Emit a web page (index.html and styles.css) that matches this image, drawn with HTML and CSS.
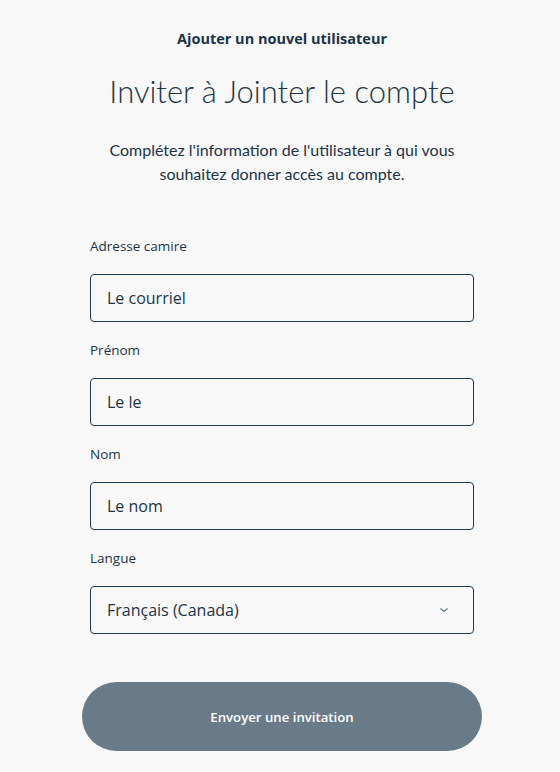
FILE: index.html
```html
<!DOCTYPE html>
<html lang="fr">
<head>
<meta charset="utf-8">
<title>Inviter à Jointer le compte</title>
<link rel="stylesheet" href="styles.css">
</head>
<body>
<main class="page">
  <p class="eyebrow">Ajouter un nouvel utilisateur</p>
  <h1 class="title">Inviter à Jointer le compte</h1>
  <p class="intro">Complétez l'information de l'utilisateur à qui vous<br>souhaitez donner accès au compte.</p>
  <form class="form">
    <div class="field">
      <label class="label">Adresse camire</label>
      <div class="input">Le courriel</div>
    </div>
    <div class="field">
      <label class="label">Prénom</label>
      <div class="input">Le le</div>
    </div>
    <div class="field">
      <label class="label">Nom</label>
      <div class="input">Le nom</div>
    </div>
    <div class="field">
      <label class="label">Langue</label>
      <div class="input select">
        <span>Français (Canada)</span>
        <svg class="chev" width="10" height="6" viewBox="0 0 10 6"><path d="M1.5 1.5 L5 4.5 L8.5 1.5" fill="none" stroke="#5a6e7e" stroke-width="1.1"/></svg>
      </div>
    </div>
    <button type="button" class="submit">Envoyer une invitation</button>
  </form>
</main>
</body>
</html>
```

FILE: styles.css
```css
html, body {
  margin: 0;
  padding: 0;
  background: #f8f8f8;
}
body {
  font-family: "Open Sans", "Noto Sans", sans-serif;
  color: #1c3447;
}
.page {
  width: 400px;
  margin-left: 82px;
  padding-top: 29px;
  display: flex;
  flex-direction: column;
  align-items: center;
}
.eyebrow {
  margin: 0;
  font-family: "Open Sans", sans-serif;
  font-weight: 700;
  font-size: 14.5px;
  line-height: 20px;
  color: #1c3447;
}
.title {
  margin: 22px 0 0;
  font-family: "Lato", sans-serif;
  font-weight: 300;
  font-size: 31px;
  line-height: 40px;
  color: #1c3447;
}
.intro {
  margin: 27px 0 0;
  font-family: "Lato", sans-serif;
  font-size: 16px;
  line-height: 24px;
  text-align: center;
  color: #1c3447;
}
.form {
  margin-top: 50px;
  width: 384px;
  display: flex;
  flex-direction: column;
}
.field {
  display: flex;
  flex-direction: column;
  margin-bottom: 18px;
}
.label {
  font-size: 13.5px;
  line-height: 20px;
  margin-bottom: 18px;
  color: #1c3447;
}
.input {
  box-sizing: border-box;
  height: 48px;
  border: 1px solid #1c3a50;
  border-radius: 4px;
  padding: 0 16px;
  display: flex;
  align-items: center;
  font-size: 16px;
  color: #1c3447;
}
.select {
  justify-content: space-between;
  padding-right: 24px;
}
.chev {
  display: block;
}
.submit {
  margin: 30px 0 0 -8px;
  width: 400px;
  height: 69px;
  border: none;
  border-radius: 35px;
  background: #697b88;
  color: #ffffff;
  font-family: "Open Sans", sans-serif;
  font-size: 13.2px;
  font-weight: 600;
  padding-top: 2px;
}
```
